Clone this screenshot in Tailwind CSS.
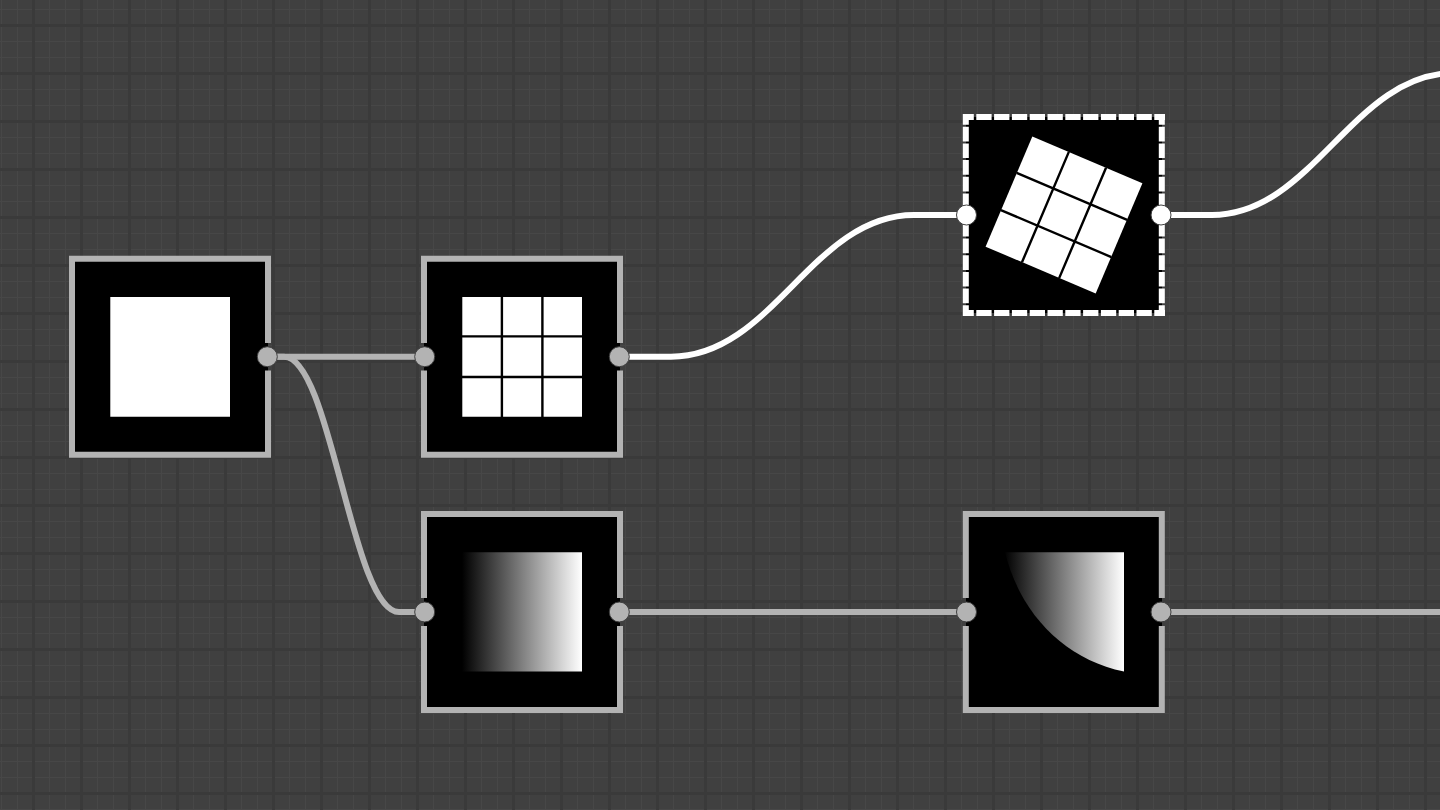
<!DOCTYPE html>
<html lang="en">
<head>
<meta charset="utf-8">
<meta name="viewport" content="width=device-width, initial-scale=1">
<title>Node editor</title>
<script src="https://cdn.jsdelivr.net/npm/@tailwindcss/browser@4"></script>
</head>
<body class="bg-[#404040]">
<main class="relative h-screen w-full overflow-hidden" aria-label="Node canvas">
  <svg class="absolute inset-0 size-full" aria-hidden="true">
    <defs>
      <pattern id="minor" x="1" y="9" width="16" height="16" patternUnits="userSpaceOnUse">
        <path d="M0 0H16V1H1V16H0Z" fill="#474747"/>
      </pattern>
      <pattern id="major" x="32" y="24" width="48" height="48" patternUnits="userSpaceOnUse">
        <path d="M0 0H48V3H3V48H0Z" fill="#3a3a3a"/>
      </pattern>
      <linearGradient id="fade" gradientUnits="userSpaceOnUse" x1="41" y1="0" x2="161" y2="0">
        <stop offset="0" stop-color="#000"/><stop offset="1" stop-color="#fff"/>
      </linearGradient>
      <symbol id="frame" viewBox="0 0 202 202">
        <path d="M3 3H199V199H3Z" fill="#000"/>
      </symbol>
    </defs>
    <rect width="100%" height="100%" fill="url(#minor)"/>
    <rect width="100%" height="100%" fill="url(#major)"/>
    <g fill="none" stroke-width="6">
      <g stroke="#b3b3b3">
        <path d="M267 356.700H425"/>
        <path d="M267 356.700H284C331 356.700 352 612 399 612H425"/>
        <path d="M619 612H967"/>
        <path d="M1161 612H4000"/>
      </g>
      <g stroke="#fff">
        <path d="M619 356.700H671C773 356.700 812 215 914 215H967"/>
        <path d="M1161 215H1212C1313 215 1353 73 1454 73H1500"/>
      </g>
    </g>
  </svg>

  <button type="button" aria-label="Square" class="absolute left-[69px] top-[256px] size-[202px]">
    <svg class="block size-full overflow-visible" viewBox="0 0 202 202" aria-hidden="true">
      <use href="#frame"/>
      <path d="M41.300 41H161V160.700H41.300Z" fill="#fff"/>
      <path d="M199 87V2.800H3V198.800H199V114.600" fill="none" stroke="#b3b3b3" stroke-width="6"/>
      <circle cx="198.300" cy="100.700" r="10" fill="#b3b3b3" stroke="#404040"/>
    </svg>
  </button>

  <button type="button" aria-label="Grid" class="absolute left-[421px] top-[256px] size-[202px]">
    <svg class="block size-full overflow-visible" viewBox="0 0 202 202" aria-hidden="true">
      <use href="#frame"/>
      <path d="M41.300 41H161V160.700H41.300Z" fill="#fff"/>
      <path d="M80.900 41V161M121.400 41V161M41 80.400H161M41 121H161" stroke="#000" stroke-width="2.400"/>
      <path d="M3 87V2.800H199V87M199 114.600V198.800H3V114.600" fill="none" stroke="#b3b3b3" stroke-width="6"/>
      <circle cx="3.700" cy="100.700" r="10" fill="#b3b3b3" stroke="#404040"/>
      <circle cx="198.300" cy="100.700" r="10" fill="#b3b3b3" stroke="#404040"/>
    </svg>
  </button>

  <button type="button" aria-label="Rotated grid" aria-pressed="true" class="absolute left-[963px] top-[114px] size-[202px]">
    <svg class="block size-full overflow-visible" viewBox="0 0 202 202" aria-hidden="true">
      <use href="#frame"/>
      <g transform="rotate(23 101 101)">
        <path d="M41.200 41.200H160.800V160.800H41.200Z" fill="#fff"/>
        <path d="M80.800 41V161M121.200 41V161M41 80.800H161M41 121.200H161" stroke="#000" stroke-width="2.400"/>
      </g>
      <g fill="none" stroke="#fff" stroke-width="6">
        <path d="M0 3H202M0 199H202" stroke-dasharray="10.800 2.500 15.300 2.500 15.300 2.500 15.300 2.500 15.300 2.500 15.300 2.500 15.300 2.500 15.300 2.500 15.300 2.500 15.300 2.500 15.300 2.500 12 0"/>
        <path d="M2.800 0V101M2.800 202V101M198.800 0V101M198.800 202V101" stroke-dasharray="10.700 2 14.700 2 14.700 2 14.700 2 14.700 2 40 0"/>
      </g>
      <circle cx="3.500" cy="101" r="10" fill="#fff" stroke="#404040"/>
      <circle cx="198" cy="101" r="10" fill="#fff" stroke="#404040"/>
    </svg>
  </button>

  <button type="button" aria-label="Gradient" class="absolute left-[421px] top-[511px] size-[202px]">
    <svg class="block size-full overflow-visible" viewBox="0 0 202 202" aria-hidden="true">
      <use href="#frame"/>
      <path d="M41 41.300H161V160.500H41Z" fill="url(#fade)"/>
      <path d="M3 87V3H199V87M199 115V199H3V115" fill="none" stroke="#b3b3b3" stroke-width="6"/>
      <circle cx="3.700" cy="101" r="10" fill="#b3b3b3" stroke="#404040"/>
      <circle cx="198.300" cy="101" r="10" fill="#b3b3b3" stroke="#404040"/>
    </svg>
  </button>

  <button type="button" aria-label="Clipped gradient" class="absolute left-[963px] top-[511px] size-[202px]">
    <svg class="block size-full overflow-visible" viewBox="0 0 202 202" aria-hidden="true">
      <use href="#frame"/>
      <path d="M42 41.300H161V160.500C101 148 57 102 42 41.300Z" fill="url(#fade)"/>
      <path d="M2.800 87V3H198.800V87M198.800 115V199H2.800V115" fill="none" stroke="#b3b3b3" stroke-width="6"/>
      <circle cx="3.500" cy="101" r="10" fill="#b3b3b3" stroke="#404040"/>
      <circle cx="198" cy="101" r="10" fill="#b3b3b3" stroke="#404040"/>
    </svg>
  </button>
</main>
</body>
</html>
